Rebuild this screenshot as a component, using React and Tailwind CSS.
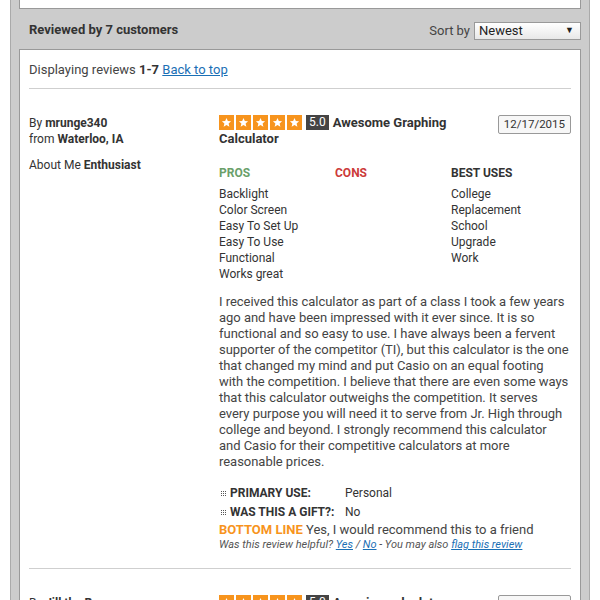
import React from 'react'

const Stars = () => (
  <div className="flex gap-[2px]">
    {[0, 1, 2, 3, 4].map(i => (
      <span key={i} className="w-[15px] h-[15px] bg-[#f7941d] flex items-center justify-center">
        <svg width="11" height="11" viewBox="0 0 24 24">
          <path d="M12 2l2.9 6.9 7.1.6-5.4 4.7 1.7 7.3L12 17.6 5.7 21.5l1.7-7.3L2 9.5l7.1-.6z" fill="#fff" />
        </svg>
      </span>
    ))}
  </div>
)

const Dots = () => (
  <svg width="6" height="6" viewBox="0 0 6 6" className="mr-[3px]">
    {[0, 2, 4].map(y => [0, 2, 4].map(x => <rect key={`${x}-${y}`} x={x} y={y} width="1" height="1" fill="#555" />))}
  </svg>
)

const Review = ({ user, place, about, date, title, pros, cons, uses, body, primary, gift }) => (
  <div className="flex pt-[26px] pb-[15px] border-b border-[#cfcfcf]">
    <div className="w-[190px] shrink-0 text-[12px] leading-[16px] text-[#333]">
      <div>By <b>{user}</b></div>
      <div>from <b>{place}</b></div>
      <div className="mt-[10px]">About Me <b>{about}</b></div>
    </div>
    <div className="flex-1">
      <div className="flex justify-between items-start">
        <div className="w-[250px] text-[13px] leading-[16px] font-bold text-[#333]">
          <span className="inline-flex align-top mr-[4px]"><Stars /></span>
          <span className="inline-block bg-[#444] text-white font-normal text-[12px] leading-[15px] px-[3px] mr-[4px] align-top">5.0</span>
          {title}
        </div>
        <div className="border border-[#999] bg-[#f7f7f7] rounded-[2px] text-[11.5px] leading-[17px] px-[5px] text-[#333]">{date}</div>
      </div>
      <div className="grid grid-cols-[116px_116px_1fr] mt-[18px] text-[12px] leading-[16px] text-[#333]">
        <div>
          <div className="font-bold text-[#6a9f6a] mb-[5px]">PROS</div>
          {pros.map(p => <div key={p}>{p}</div>)}
        </div>
        <div>
          <div className="font-bold text-[#cc3a3a] mb-[5px]">CONS</div>
          {cons.map(p => <div key={p}>{p}</div>)}
        </div>
        <div>
          <div className="font-bold text-[#333] mb-[5px]">BEST USES</div>
          {uses.map(p => <div key={p}>{p}</div>)}
        </div>
      </div>
      <p className="mt-[12px] text-[13px] leading-[16px] text-[#444] tracking-[-0.03px]">{body}</p>
      <div className="mt-[14px] text-[12px] leading-[19px] text-[#333]">
        <div className="flex items-center pl-[2px]">
          <Dots />
          <span className="w-[115px] font-bold">PRIMARY USE:</span>
          <span>{primary}</span>
        </div>
        <div className="flex items-center pl-[2px]">
          <Dots />
          <span className="w-[115px] font-bold">WAS THIS A GIFT?:</span>
          <span>{gift}</span>
        </div>
      </div>
      <div className="text-[13px] leading-[15px] text-[#444]">
        <span className="font-bold text-[#f7941d]">BOTTOM LINE</span> Yes, I would recommend this to a friend
      </div>
      <div className="text-[11px] leading-[16px] italic text-[#555]">
        Was this review helpful? <a href="#" className="text-[#1a6fb5] underline">Yes</a> / <a href="#" className="text-[#1a6fb5] underline">No</a> - You may also <a href="#" className="text-[#1a6fb5] underline">flag this review</a>
      </div>
    </div>
  </div>
)

export default function App() {
  return (
    <div className="w-[600px] h-[600px] overflow-hidden bg-white px-[10px] font-['Roboto',sans-serif]">
      <div className="bg-[#cccccc] border-x border-[#aaa] px-[8px] min-h-[600px]">
        <div className="h-[9px] bg-white border-x border-b border-[#999]" />
        <div className="h-[40px] flex items-center justify-between pl-[10px]">
          <span className="text-[13px] font-bold text-[#333] pt-[2px]">Reviewed by 7 customers</span>
          <div className="flex items-center gap-[4px] mt-[4px]">
            <span className="text-[13px] text-[#444]">Sort by</span>
            <div className="w-[107px] h-[18px] border border-[#999] bg-gradient-to-b from-white to-[#e8e8e8] flex items-center justify-between pl-[4px] pr-[6px] text-[13px] text-[#222]">
              <span>Newest</span>
              <span className="text-[9px]">▼</span>
            </div>
          </div>
        </div>
        <div className="bg-white border border-[#999] px-[9px]">
          <div className="h-[39px] flex items-center text-[13px] text-[#444] border-b border-[#cfcfcf] pt-[2px]">
            <span>Displaying reviews <b className="text-[#333]">1-7</b>&nbsp;</span>
            <a href="#" className="text-[#1a6fb5] underline">Back to top</a>
          </div>
          <Review
            user="mrunge340"
            place="Waterloo, IA"
            about="Enthusiast"
            date="12/17/2015"
            title="Awesome Graphing Calculator"
            pros={['Backlight', 'Color Screen', 'Easy To Set Up', 'Easy To Use', 'Functional', 'Works great']}
            cons={[]}
            uses={['College', 'Replacement', 'School', 'Upgrade', 'Work']}
            body="I received this calculator as part of a class I took a few years ago and have been impressed with it ever since. It is so functional and so easy to use. I have always been a fervent supporter of the competitor (TI), but this calculator is the one that changed my mind and put Casio on an equal footing with the competition. I believe that there are even some ways that this calculator outweighs the competition. It serves every purpose you will need it to serve from Jr. High through college and beyond. I strongly recommend this calculator and Casio for their competitive calculators at more reasonable prices."
            primary="Personal"
            gift="No"
          />
          <Review
            user="Jill the Runner"
            place="Chicago, IL"
            about="Student"
            date="12/11/2015"
            title="Amazing calculator"
            pros={['Easy To Use']}
            cons={[]}
            uses={['School']}
            body="Great calculator."
            primary="School"
            gift="No"
          />
        </div>
      </div>
    </div>
  )
}
